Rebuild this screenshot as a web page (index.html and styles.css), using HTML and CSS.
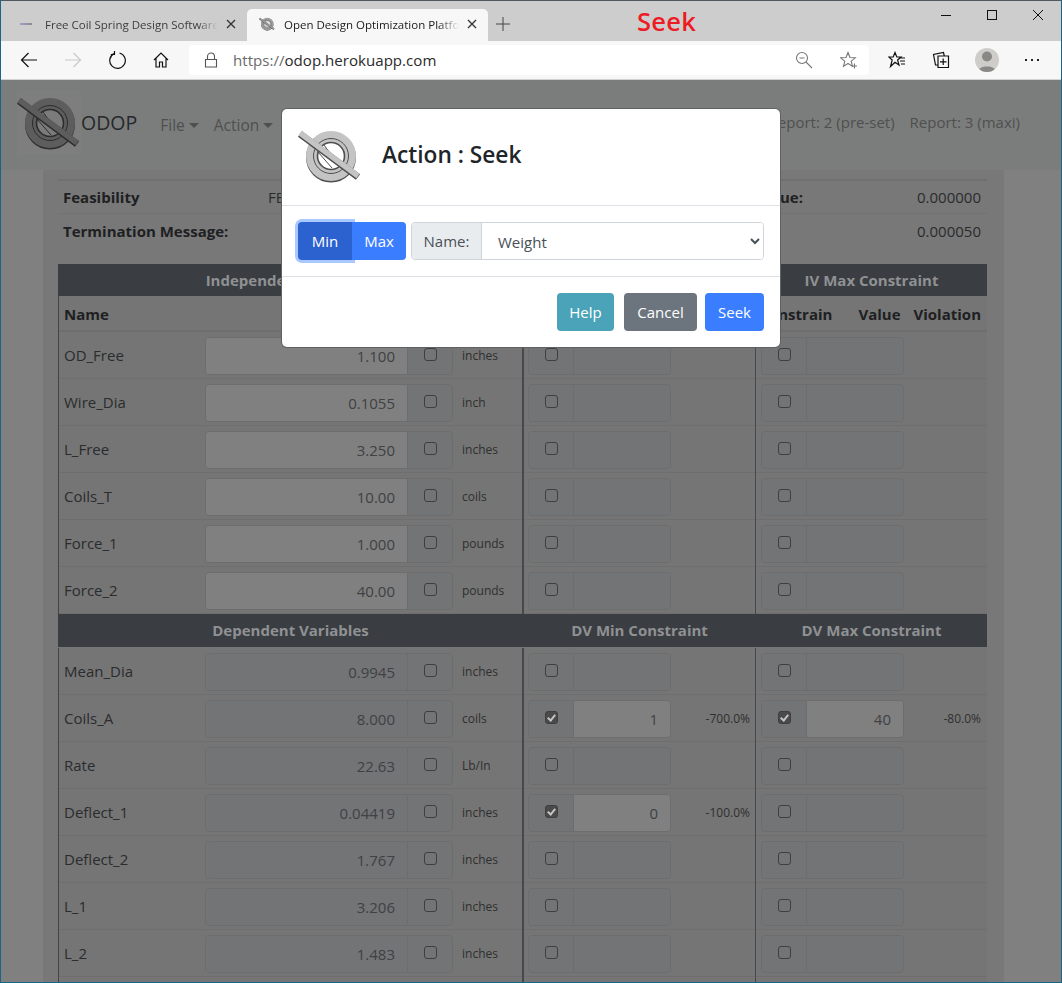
FILE: index.html
```html
<!DOCTYPE html>
<html lang="en">

<head>
    <meta charset="UTF-8">
    <title>Open Design Optimization Platform</title>
    <link rel="stylesheet" href="styles.css">
</head>

<body>
    <svg class="defs" width="0" height="0">
        <defs>
            <symbol id="odop-logo" viewBox="0 0 64 54">
                <circle cx="33" cy="28.5" r="21" fill="none" stroke="var(--logo-dark)" stroke-width="8" />
                <circle cx="33" cy="27" r="21" fill="var(--logo-main)" stroke="var(--logo-main)" stroke-width="8" />
                <circle cx="33" cy="27" r="17.5" fill="none" stroke="var(--logo-dark)" stroke-width="1" />
                <circle cx="33" cy="27" r="13.5" fill="var(--logo-hole)" stroke="var(--logo-dark)" stroke-width="1.6" />
                <path d="M26 16 L42 38 M20 23 L34 39" stroke="var(--logo-dark)" stroke-width="1" />
                <path d="M2 5 L60 48" stroke="var(--logo-dark)" stroke-width="7" />
                <path d="M2 4 L60 47" stroke="var(--logo-main)" stroke-width="5.5" />
            </symbol>
        </defs>
    </svg>

    <div class="window">
        <div class="tabstrip">
            <div class="tab">
                <span class="favicon-dash"></span>
                <span class="tab-title">Free Coil Spring Design Software</span>
                <svg class="tab-close" width="10" height="10" viewBox="0 0 10 10"><path d="M1 1 L9 9 M9 1 L1 9" /></svg>
            </div>
            <div class="tab tab-active">
                <svg class="favicon" width="16" height="16"><use href="#odop-logo" /></svg>
                <span class="tab-title">Open Design Optimization Platform</span>
                <svg class="tab-close" width="10" height="10" viewBox="0 0 10 10"><path d="M1 1 L9 9 M9 1 L1 9" /></svg>
            </div>
            <svg class="new-tab" width="14" height="14" viewBox="0 0 14 14"><path d="M7 0 V14 M0 7 H14" /></svg>
            <div class="annotation">Seek</div>
            <div class="win-controls">
                <svg width="12" height="12" viewBox="0 0 12 12"><path d="M1 6.5 H11" /></svg>
                <svg width="12" height="12" viewBox="0 0 12 12"><rect x="1.5" y="1.5" width="9" height="9" /></svg>
                <svg width="12" height="12" viewBox="0 0 12 12"><path d="M1 1 L11 11 M11 1 L1 11" /></svg>
            </div>
        </div>

        <div class="toolbar">
            <svg class="tool tool-back" width="18" height="18" viewBox="0 0 18 18"><path d="M17 9 H1.5 M8.5 2 L1.5 9 L8.5 16" /></svg>
            <svg class="tool tool-forward" width="18" height="18" viewBox="0 0 18 18"><path d="M1 9 H16.5 M9.5 2 L16.5 9 L9.5 16" /></svg>
            <svg class="tool tool-reload" width="18" height="18" viewBox="0 0 18 18"><path d="M6 2.6 A7.8 7.8 0 1 0 11.5 2 M6.5 0 V3.5 H2.8" /></svg>
            <svg class="tool tool-home" width="16" height="16" viewBox="0 0 16 16"><path d="M1 8 L8 1 L15 8 M3 6.5 V15 H6.5 V10 H9.5 V15 H13 V6.5" /></svg>
            <div class="addressbar">
                <svg class="lock" width="14" height="16" viewBox="0 0 14 16"><path d="M1.5 7.5 H12.5 V15 H1.5 Z M3.5 7.5 V4.5 A3.5 3.5 0 0 1 10.5 4.5 V7.5" /></svg>
                <span class="url"><span class="url-scheme">https://</span>odop.herokuapp.com</span>
                <svg class="addr-icon icon-zoom" width="18" height="18" viewBox="0 0 18 18"><circle cx="7" cy="7" r="5.5" /><path d="M4.5 7 H9.5 M11 11 L17 17" /></svg>
                <svg class="addr-icon icon-fav" width="18" height="18" viewBox="0 0 18 18"><path d="M8 1.5 L10 6.5 L15.3 6.8 L11.2 10.2 L12.5 15.4 L8 12.5 L3.5 15.4 L4.8 10.2 L0.7 6.8 L6 6.5 Z M14.5 12.5 V17.5 M12 15 H17" /></svg>
            </div>
            <svg class="tool tool-favs" width="18" height="18" viewBox="0 0 18 18"><path d="M7 1.5 L8.8 6 H13 L9.6 9 L11 14 L7 11.2 L2.5 15.5 L4.2 9 L0.8 6 H5.2 Z M11 7 H17 M12 10 H17 M13 13 H17" /></svg>
            <svg class="tool tool-coll" width="18" height="18" viewBox="0 0 18 18"><path d="M6 5 H16.5 V16.5 H6 Z M11.2 7.5 V14 M8 10.8 H14.5 M6 14 L3.5 14 L1.5 3.5 L11.5 1.5 L12.3 5" /></svg>
            <div class="avatar">
                <svg width="24" height="24" viewBox="0 0 24 24"><circle cx="12" cy="8.5" r="5" /><path d="M2.5 24 C3 16.5 21 16.5 21.5 24 Z" /></svg>
            </div>
            <div class="more-dots"><span></span><span></span><span></span></div>
        </div>

        <div class="viewport">
            <nav class="navbar">
                <div class="nav-logo"><svg width="64" height="54"><use href="#odop-logo" /></svg></div>
                <span class="brand">ODOP</span>
                <span class="nav-link has-caret">File</span>
                <span class="nav-link has-caret">Action</span>
                <span class="nav-reports">
                    <span class="nav-link">Report: 2 (pre-set)</span>
                    <span class="nav-link">Report: 3 (maxi)</span>
                </span>
            </nav>

            <main class="container">
                <div class="summary">
                    <div class="summary-row">
                        <b class="summary-label">Feasibility</b>
                        <span class="summary-state">FEASIBLE</span>
                        <b class="summary-key">Objective Value:</b>
                        <span class="summary-num">0.000000</span>
                    </div>
                    <div class="summary-row">
                        <b class="summary-label">Termination Message:</b>
                        <span class="summary-state"></span>
                        <span class="summary-num">0.000050</span>
                    </div>
                </div>

                <div class="band">
                    <div class="band-main">Independent Variables</div>
                    <div class="band-cell"></div>
                    <div class="band-cell">IV Max Constraint</div>
                </div>
                <div class="row head-row">
                    <div class="name">Name</div>
                    <div></div>
                    <div class="cell-unit"></div>
                    <div></div>
                    <div class="head-con"><span class="head-constrain">Constrain</span><span class="head-val">Value</span><span>Violation</span></div>
                </div>

                <div class="row">
                    <div class="name">OD_Free</div>
                    <div class="group"><input class="val" value="1.100" readonly><span class="addon"><i class="cb"></i></span></div>
                    <div class="cell-unit">inches</div>
                    <div class="con"><div class="group group-con"><span class="addon"><i class="cb"></i></span><input class="val val-off" readonly></div></div>
                    <div class="con con-last"><div class="group group-con"><span class="addon"><i class="cb"></i></span><input class="val val-off" readonly></div></div>
                </div>
                <div class="row">
                    <div class="name">Wire_Dia</div>
                    <div class="group"><input class="val" value="0.1055" readonly><span class="addon"><i class="cb"></i></span></div>
                    <div class="cell-unit">inch</div>
                    <div class="con"><div class="group group-con"><span class="addon"><i class="cb"></i></span><input class="val val-off" readonly></div></div>
                    <div class="con con-last"><div class="group group-con"><span class="addon"><i class="cb"></i></span><input class="val val-off" readonly></div></div>
                </div>
                <div class="row">
                    <div class="name">L_Free</div>
                    <div class="group"><input class="val" value="3.250" readonly><span class="addon"><i class="cb"></i></span></div>
                    <div class="cell-unit">inches</div>
                    <div class="con"><div class="group group-con"><span class="addon"><i class="cb"></i></span><input class="val val-off" readonly></div></div>
                    <div class="con con-last"><div class="group group-con"><span class="addon"><i class="cb"></i></span><input class="val val-off" readonly></div></div>
                </div>
                <div class="row">
                    <div class="name">Coils_T</div>
                    <div class="group"><input class="val" value="10.00" readonly><span class="addon"><i class="cb"></i></span></div>
                    <div class="cell-unit">coils</div>
                    <div class="con"><div class="group group-con"><span class="addon"><i class="cb"></i></span><input class="val val-off" readonly></div></div>
                    <div class="con con-last"><div class="group group-con"><span class="addon"><i class="cb"></i></span><input class="val val-off" readonly></div></div>
                </div>
                <div class="row">
                    <div class="name">Force_1</div>
                    <div class="group"><input class="val" value="1.000" readonly><span class="addon"><i class="cb"></i></span></div>
                    <div class="cell-unit">pounds</div>
                    <div class="con"><div class="group group-con"><span class="addon"><i class="cb"></i></span><input class="val val-off" readonly></div></div>
                    <div class="con con-last"><div class="group group-con"><span class="addon"><i class="cb"></i></span><input class="val val-off" readonly></div></div>
                </div>
                <div class="row">
                    <div class="name">Force_2</div>
                    <div class="group"><input class="val" value="40.00" readonly><span class="addon"><i class="cb"></i></span></div>
                    <div class="cell-unit">pounds</div>
                    <div class="con"><div class="group group-con"><span class="addon"><i class="cb"></i></span><input class="val val-off" readonly></div></div>
                    <div class="con con-last"><div class="group group-con"><span class="addon"><i class="cb"></i></span><input class="val val-off" readonly></div></div>
                </div>

                <div class="band band-second">
                    <div class="band-main">Dependent Variables</div>
                    <div class="band-cell">DV Min Constraint</div>
                    <div class="band-cell">DV Max Constraint</div>
                </div>

                <div class="row">
                    <div class="name">Mean_Dia</div>
                    <div class="group"><input class="val val-off" value="0.9945" readonly><span class="addon"><i class="cb"></i></span></div>
                    <div class="cell-unit">inches</div>
                    <div class="con"><div class="group group-con"><span class="addon"><i class="cb"></i></span><input class="val val-off" readonly></div></div>
                    <div class="con con-last"><div class="group group-con"><span class="addon"><i class="cb"></i></span><input class="val val-off" readonly></div></div>
                </div>
                <div class="row">
                    <div class="name">Coils_A</div>
                    <div class="group"><input class="val val-off" value="8.000" readonly><span class="addon"><i class="cb"></i></span></div>
                    <div class="cell-unit">coils</div>
                    <div class="con"><div class="group group-con"><span class="addon"><i class="cb cb-on"></i></span><input class="val" value="1" readonly></div><span class="viol">-700.0%</span></div>
                    <div class="con con-last"><div class="group group-con"><span class="addon"><i class="cb cb-on"></i></span><input class="val" value="40" readonly></div><span class="viol">-80.0%</span></div>
                </div>
                <div class="row">
                    <div class="name">Rate</div>
                    <div class="group"><input class="val val-off" value="22.63" readonly><span class="addon"><i class="cb"></i></span></div>
                    <div class="cell-unit">Lb/In</div>
                    <div class="con"><div class="group group-con"><span class="addon"><i class="cb"></i></span><input class="val val-off" readonly></div></div>
                    <div class="con con-last"><div class="group group-con"><span class="addon"><i class="cb"></i></span><input class="val val-off" readonly></div></div>
                </div>
                <div class="row">
                    <div class="name">Deflect_1</div>
                    <div class="group"><input class="val val-off" value="0.04419" readonly><span class="addon"><i class="cb"></i></span></div>
                    <div class="cell-unit">inches</div>
                    <div class="con"><div class="group group-con"><span class="addon"><i class="cb cb-on"></i></span><input class="val" value="0" readonly></div><span class="viol">-100.0%</span></div>
                    <div class="con con-last"><div class="group group-con"><span class="addon"><i class="cb"></i></span><input class="val val-off" readonly></div></div>
                </div>
                <div class="row">
                    <div class="name">Deflect_2</div>
                    <div class="group"><input class="val val-off" value="1.767" readonly><span class="addon"><i class="cb"></i></span></div>
                    <div class="cell-unit">inches</div>
                    <div class="con"><div class="group group-con"><span class="addon"><i class="cb"></i></span><input class="val val-off" readonly></div></div>
                    <div class="con con-last"><div class="group group-con"><span class="addon"><i class="cb"></i></span><input class="val val-off" readonly></div></div>
                </div>
                <div class="row">
                    <div class="name">L_1</div>
                    <div class="group"><input class="val val-off" value="3.206" readonly><span class="addon"><i class="cb"></i></span></div>
                    <div class="cell-unit">inches</div>
                    <div class="con"><div class="group group-con"><span class="addon"><i class="cb"></i></span><input class="val val-off" readonly></div></div>
                    <div class="con con-last"><div class="group group-con"><span class="addon"><i class="cb"></i></span><input class="val val-off" readonly></div></div>
                </div>
                <div class="row">
                    <div class="name">L_2</div>
                    <div class="group"><input class="val val-off" value="1.483" readonly><span class="addon"><i class="cb"></i></span></div>
                    <div class="cell-unit">inches</div>
                    <div class="con"><div class="group group-con"><span class="addon"><i class="cb"></i></span><input class="val val-off" readonly></div></div>
                    <div class="con con-last"><div class="group group-con"><span class="addon"><i class="cb"></i></span><input class="val val-off" readonly></div></div>
                </div>
                <div class="row">
                    <div class="name"></div>
                    <div class="group"><input class="val val-off" readonly><span class="addon"></span></div>
                    <div class="cell-unit"></div>
                    <div class="con"></div>
                    <div class="con con-last"></div>
                </div>
            </main>

            <div class="modal">
                <div class="modal-header">
                    <svg class="modal-logo" width="64" height="54"><use href="#odop-logo" /></svg>
                    <h5 class="modal-title">Action : Seek</h5>
                </div>
                <div class="modal-body">
                    <div class="minmax">
                        <button class="btn btn-primary btn-min">Min</button>
                        <button class="btn btn-primary btn-max">Max</button>
                    </div>
                    <div class="name-group">
                        <span class="name-label">Name:</span>
                        <select class="name-select">
                            <option>Weight</option>
                        </select>
                    </div>
                </div>
                <div class="modal-footer">
                    <button class="btn btn-info">Help</button>
                    <button class="btn btn-secondary">Cancel</button>
                    <button class="btn btn-primary btn-seek">Seek</button>
                </div>
            </div>
        </div>
    </div>
</body>

</html>
```

FILE: styles.css
```css
html,
body {
    margin: 0;
    height: 100%;
    overflow: hidden;
}

body {
    font-family: "Open Sans", "Liberation Sans", sans-serif;
    font-size: 15px;
    color: #2a2c2e;
}

.defs {
    position: absolute;
}

.window {
    height: 983px;
    box-sizing: border-box;
    border-top: 1px solid #4d5a63;
    border-left: 1px solid #1a6485;
    border-right: 1px solid #1a6485;
    border-bottom: 1px solid #1a6485;
    display: flex;
    flex-direction: column;
    --logo-main: #bdbdbd;
    --logo-dark: #555;
    --logo-hole: #f7f7f7;
}

/* browser chrome */
.tabstrip {
    height: 40px;
    flex: none;
    background: #cdcdcd;
    display: flex;
    align-items: flex-end;
    padding-left: 7px;
    box-sizing: border-box;
}

.tab {
    width: 239px;
    height: 32px;
    box-sizing: border-box;
    display: flex;
    align-items: center;
    padding: 0 11px 2px 12px;
    font-size: 11.5px;
    color: #3d3d3d;
}

.tab-active {
    width: 241px;
    background: #f7f7f7;
    border-radius: 5px 5px 0 0;
    color: #1a1a1a;
    --logo-main: #a0a0a0;
    --logo-hole: #e4e4e4;
}

.favicon-dash {
    width: 12px;
    height: 2px;
    background: linear-gradient(90deg, #a79bc9, #8a8a8a);
    flex: none;
}

.favicon {
    flex: none;
}

.tab-title {
    flex: 1;
    margin-left: 13px;
    white-space: nowrap;
    overflow: hidden;
    -webkit-mask-image: linear-gradient(90deg, #000 88%, transparent 100%);
    mask-image: linear-gradient(90deg, #000 88%, transparent 100%);
}

.tab-active .tab-title {
    margin-left: 9px;
}

.tab-close {
    flex: none;
    margin-left: 8px;
    stroke: #333;
    stroke-width: 1.3;
    fill: none;
}

.new-tab {
    margin: 0 0 10px 8px;
    stroke: #444;
    stroke-width: 1;
    fill: none;
    flex: none;
}

.annotation {
    margin: 0 0 4px 127px;
    font-size: 25.5px;
    font-weight: 600;
    letter-spacing: 0.3px;
    color: #ed1c24;
    line-height: 32px;
}

.win-controls {
    margin-left: auto;
    align-self: flex-start;
    display: flex;
    gap: 34px;
    padding: 8px 17px 0 0;
}

.win-controls svg {
    stroke: #111;
    stroke-width: 1;
    fill: none;
}

.toolbar {
    height: 39px;
    flex: none;
    background: #f7f7f7;
    border-bottom: 1px solid #d2d2d2;
    box-sizing: border-box;
    display: flex;
    align-items: center;
    padding-left: 19px;
}

.tool {
    flex: none;
    stroke: #111;
    stroke-width: 1.2;
    fill: none;
}

.tool-forward {
    margin-left: 26px;
    stroke: #c9c9c9;
}

.tool-reload {
    margin-left: 26px;
}

.tool-home {
    margin-left: 27px;
}

.addressbar {
    width: 680px;
    height: 30px;
    margin-left: 20px;
    background: #fff;
    border-radius: 4px;
    display: flex;
    align-items: center;
    flex: none;
}

.lock {
    margin-left: 15px;
    stroke: #555;
    stroke-width: 1.1;
    fill: none;
}

.url {
    margin-left: 15px;
    font-size: 15.1px;
    color: #2a2a2a;
}

.url-scheme {
    color: #6a6a6a;
}

.addr-icon {
    stroke: #777;
    stroke-width: 1.1;
    fill: none;
    flex: none;
}

.icon-zoom {
    margin-left: auto;
}

.icon-fav {
    margin: 0 11px 0 27px;
}

.tool-favs {
    margin-left: 19px;
}

.tool-coll {
    margin-left: 26px;
}

.avatar {
    width: 24px;
    height: 24px;
    margin-left: 25px;
    border-radius: 50%;
    background: #cfcdca;
    overflow: hidden;
    flex: none;
}

.avatar svg {
    fill: #8a8885;
    display: block;
}

.more-dots {
    display: flex;
    gap: 4px;
    margin-left: 26px;
}

.more-dots span {
    width: 2px;
    height: 2px;
    background: #222;
}

/* page under the modal backdrop */
.viewport {
    flex: 1;
    position: relative;
    overflow: hidden;
    background: #808080;
}

.navbar {
    height: 90px;
    background: #7b7d7c;
    display: flex;
    align-items: center;
    box-sizing: border-box;
    padding: 0 41px 0 16px;
    --logo-main: #5d5d5d;
    --logo-dark: #2c2c2c;
    --logo-hole: #7b7b7b;
}

.nav-logo {
    width: 64px;
    height: 64px;
    flex: none;
    background: #7e7e7e;
    display: flex;
    align-items: center;
    margin-top: -4px;
}

.brand {
    font-size: 19.5px;
    margin-top: -6px;
    color: #26282a;
}

.nav-link {
    color: #4f4f4f;
    font-size: 15px;
}

.brand + .nav-link {
    margin-left: 23px;
}

.has-caret {
    margin-right: 15px;
    font-size: 15.5px;
}

.has-caret::after {
    content: "";
    display: inline-block;
    margin-left: 4px;
    vertical-align: 3px;
    border-top: 5px solid #4f4f4f;
    border-left: 5px solid transparent;
    border-right: 5px solid transparent;
}

.nav-reports {
    margin-left: auto;
    margin-top: -6px;
    display: flex;
    gap: 15px;
}

.container {
    width: 961px;
    margin-left: 42px;
    background: #787878;
    box-sizing: border-box;
    padding: 9px 17px 0 15px;
}

.summary {
    border-top: 2px solid #707070;
    height: 83px;
}

.summary-row {
    height: 33px;
    border-bottom: 1px solid #727272;
    box-sizing: border-box;
    display: flex;
    align-items: center;
    padding: 0 6px 0 5px;
}

.summary-row + .summary-row {
    border-bottom: 0;
}

.summary-label {
    width: 205px;
    flex: none;
    color: #1e2022;
}

.summary-state {
    flex: 1;
}

.summary-key {
    color: #1e2022;
}

.summary-num {
    width: 178px;
    text-align: right;
    flex: none;
}

.band {
    height: 32px;
    background: #3a3d42;
    color: #8f9193;
    font-weight: 700;
    display: grid;
    grid-template-columns: 465px 233px 231px;
    align-items: center;
    text-align: center;
}

.band-second {
    height: 34px;
    padding-bottom: 2px;
    box-sizing: border-box;
    border-bottom: 1px solid #757575;
}

.row {
    height: 47px;
    display: grid;
    grid-template-columns: 147px 248px 69px 233px 231px;
    border-bottom: 1px solid #6e6e6e;
    box-sizing: border-box;
    background: #757575;
}

.head-row {
    height: 36px;
    border-bottom: 2px solid #6e6e6e;
    font-weight: 700;
    color: #1e2022;
    line-height: 36px;
}

.name {
    border-left: 1px solid #444;
    padding-left: 5px;
    line-height: 46px;
    box-sizing: border-box;
}

.head-row .name {
    line-height: 36px;
}

.group {
    height: 38px;
    margin-top: 5px;
    display: flex;
    box-sizing: border-box;
    border: 1px solid #6b6d6f;
    border-radius: 4px;
    overflow: hidden;
}

.group-con {
    width: 143px;
    flex: none;
}

.val {
    flex: 1;
    min-width: 0;
    border: 0;
    outline: 0;
    padding: 0 12px 0 0;
    margin: 0;
    text-align: right;
    font: inherit;
    color: #3f4143;
    background: #808080;
}

.val-off {
    background: #727476;
}

.addon {
    width: 45px;
    flex: none;
    background: #727476;
    border-left: 1px solid #6b6d6f;
    display: flex;
    justify-content: center;
    padding-top: 10px;
    box-sizing: border-box;
}

.group-con .addon {
    border-left: 0;
    border-right: 1px solid #6b6d6f;
}

.cb {
    width: 11px;
    height: 11px;
    box-sizing: content-box;
    border: 1px solid #3f3f3f;
    border-radius: 3px;
    position: relative;
}

.cb-on {
    background: #4a4a4a;
}

.cb-on::after {
    content: "";
    position: absolute;
    left: 3px;
    top: 1px;
    width: 3px;
    height: 6px;
    border: solid #c4c4c4;
    border-width: 0 2px 2px 0;
    transform: rotate(40deg);
}

.cell-unit {
    font-size: 12px;
    line-height: 47px;
    padding-left: 9px;
    color: #2f2f2f;
}

.con {
    border-left: 2px solid #45484c;
    box-sizing: border-box;
    display: flex;
    padding-left: 4px;
}

.con-last {
    border-left: 1px solid #45484c;
    padding-left: 5px;
}

.viol {
    flex: 1;
    text-align: right;
    font-size: 12px;
    line-height: 47px;
    padding-right: 5px;
    color: #2f2f2f;
}

.head-con {
    display: flex;
    justify-content: flex-end;
    padding-right: 5px;
}

.head-constrain {
    margin-right: 26px;
}

.head-val {
    margin-right: 13px;
}

/* modal */
.modal {
    position: absolute;
    left: 281px;
    top: 29px;
    width: 498px;
    height: 238px;
    background: #fff;
    border-radius: 5px;
    box-shadow: 0 0 0 1px #5f6163;
    display: flex;
    flex-direction: column;
    --logo-main: #c4c4c4;
    --logo-dark: #4e4e4e;
    --logo-hole: #fff;
}

.modal-header {
    height: 97px;
    flex: none;
    box-sizing: border-box;
    border-bottom: 1px solid #dee2e6;
    display: flex;
    align-items: center;
    padding: 0 16px 5px;
}

.modal-logo {
    flex: none;
    margin-top: 3px;
}

.modal-title {
    margin: 0 0 0 20px;
    font-size: 22.7px;
    font-weight: 600;
    color: #212529;
}

.modal-body {
    height: 71px;
    flex: none;
    box-sizing: border-box;
    border-bottom: 1px solid #dee2e6;
    display: flex;
    padding: 16px 16px 0;
    gap: 5px;
}

.minmax {
    display: flex;
    flex: none;
}

.btn {
    font: inherit;
    height: 38px;
    border: 0;
    border-radius: 4px;
    color: #fff;
    padding: 0;
}

.btn-primary {
    background: #3b7dff;
}

.btn-min {
    width: 54px;
    background: #2b62cf;
    border-radius: 4px 0 0 4px;
    box-shadow: 0 0 0 3px #a9c8ff;
    position: relative;
}

.btn-max {
    width: 54px;
    border-radius: 0 4px 4px 0;
    position: relative;
}

.name-group {
    flex: 1;
    display: flex;
    height: 38px;
    box-sizing: border-box;
    border: 1px solid #ced4da;
    border-radius: 4px;
    overflow: hidden;
}

.name-label {
    width: 70px;
    flex: none;
    box-sizing: border-box;
    background: #e9ecef;
    border-right: 1px solid #ced4da;
    line-height: 36px;
    text-align: center;
    color: #495057;
}

.name-select {
    flex: 1;
    border: 0;
    outline: 0;
    background: #fff;
    font: inherit;
    color: #495057;
    padding: 2px 0 0 12px;
}

.modal-footer {
    flex: 1;
    display: flex;
    justify-content: flex-end;
    align-items: flex-start;
    gap: 8px;
    padding: 16px 16px 0;
}

.btn-info {
    width: 57px;
    margin-right: 2px;
    background: #4aa3b8;
}

.btn-secondary {
    width: 73px;
    background: #6c757d;
}

.btn-seek {
    width: 59px;
}
```
